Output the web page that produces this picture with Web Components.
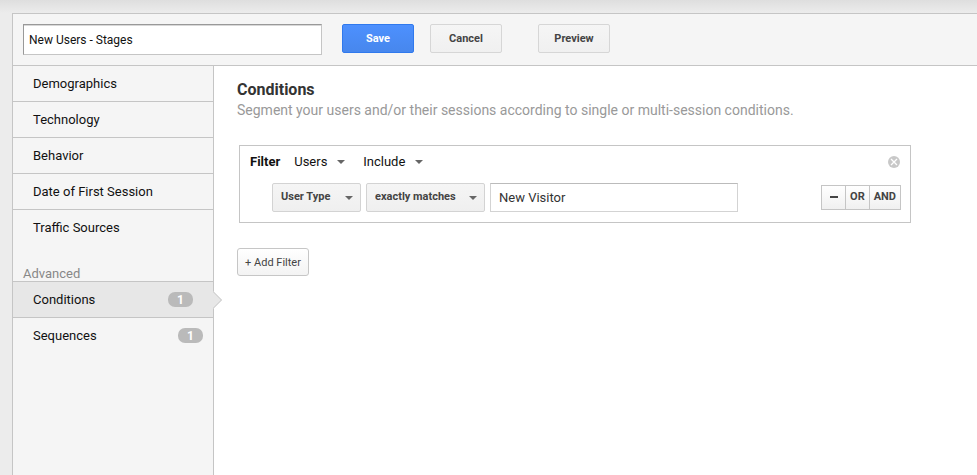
<!DOCTYPE html>
<html lang="en">
<head>
<meta charset="utf-8">
<title>Segment builder</title>
<style>
  html, body { margin: 0; height: 100%; }
  body { font: 13px/18px Roboto, "Liberation Sans", sans-serif; color: #111; background: #ececec; }
</style>
</head>
<body>
<segment-editor>
  <editor-toolbar slot="toolbar">
    <segment-name value="New Users - Stages"></segment-name>
    <push-button kind="primary">Save</push-button>
    <push-button>Cancel</push-button>
    <push-button spaced>Preview</push-button>
  </editor-toolbar>
  <side-nav slot="nav">
    <nav-item>Demographics</nav-item>
    <nav-item>Technology</nav-item>
    <nav-item>Behavior</nav-item>
    <nav-item>Date of First Session</nav-item>
    <nav-item last>Traffic Sources</nav-item>
    <nav-heading>Advanced</nav-heading>
    <nav-item count="1" selected>Conditions</nav-item>
    <nav-item count="1" last>Sequences</nav-item>
  </side-nav>
  <section-intro>
    <span slot="title">Conditions</span>
    Segment your users and/or their sessions according to single or multi-session conditions.
  </section-intro>
  <filter-card>
    <drop-down slot="scope" plain label="Filter scope" value="Users" style="--width:51px"></drop-down>
    <drop-down slot="scope" plain label="Filter mode" value="Include" style="--width:60px"></drop-down>
    <drop-down label="Dimension" value="User Type" style="--width:89px"></drop-down>
    <drop-down label="Match type" value="exactly matches" style="--width:119px"></drop-down>
    <value-field value="New Visitor"></value-field>
    <logic-buttons slot="logic"></logic-buttons>
  </filter-card>
  <push-button kind="add">+ Add Filter</push-button>
</segment-editor>

<script>
  const define = (name, html, setup) => {
    const template = document.createElement('template');
    template.innerHTML = '<style>*{box-sizing:border-box}:host{box-sizing:border-box}</style>' + html;
    customElements.define(name, class extends HTMLElement {
      constructor() {
        super();
        this.attachShadow({ mode: 'open' }).append(template.content.cloneNode(true));
      }
      connectedCallback() { if (setup) setup(this, this.shadowRoot); }
    });
  };

  define('segment-editor', `
    <style>
      :host { display: block; min-height: 100%; padding: 13px 0 0 12px;
        background: linear-gradient(#dedede, #ececec 13px); }
      .panel { display: grid; grid-template: auto 1fr / 201px 1fr; min-height: calc(100vh - 13px);
        border: solid #c5c5c5; border-width: 1px 0 0 1px; background: #f5f5f5; }
      header { grid-column: 1 / -1; border-bottom: 1px solid #c5c5c5; }
      aside { border-right: 1px solid #c5c5c5; }
      main { padding: 14px 66px 20px 23px; background: #fff; }
    </style>
    <div class="panel">
      <header><slot name="toolbar"></slot></header>
      <aside><slot name="nav"></slot></aside>
      <main><slot></slot></main>
    </div>`);

  define('editor-toolbar', `
    <style>:host { display: flex; gap: 16px; padding: 10px; }</style><slot></slot>`);

  define('segment-name', `
    <style>
      :host { display: block; margin-right: 4px; }
      input { display: block; width: 299px; height: 31px; padding: 0 5px; border: 1px solid #c5c5c5;
        border-top-color: #999; border-left-color: #999; box-shadow: inset 0 1px #d8d8d8;
        font: 12px/16px Roboto, sans-serif; color: #111; background: #fff; }
    </style><input type="text" aria-label="Segment name">`,
    (host, root) => { root.querySelector('input').value = host.getAttribute('value'); });

  define('push-button', `
    <style>
      :host { display: block; }
      :host([spaced]) { margin-left: 20px; }
      button { display: block; min-width: 72px; height: 29px; padding: 0 7px; border: 1px solid #d6d6d6;
        border-radius: 2px; background: linear-gradient(#f5f5f5, #f0f0f0); color: #444;
        font: bold 11px/16px Roboto, sans-serif; }
      :host([kind=primary]) button { border-color: #3079ed; color: #fff;
        background: linear-gradient(#4d90fe, #4787ed); }
      :host([kind=add]) { margin-top: 25px; }
      :host([kind=add]) button { height: 28px; padding-top: 2px; border-color: #c6c6c6; border-radius: 3px;
        background: linear-gradient(#fff, #f3f3f3); font-weight: 400; }
    </style><button type="button"><slot></slot></button>`);

  define('side-nav', `<style>:host { display: block; } nav { display: block; }</style>
    <nav aria-label="Segment sections"><slot></slot></nav>`);

  define('nav-item', `
    <style>
      :host { display: block; position: relative; }
      a { display: flex; justify-content: space-between; align-items: center; height: 36px;
        padding: 0 10px 0 20px; border-bottom: 1px solid #c5c5c5; color: #111; text-decoration: none; }
      :host([last]) a { border-bottom-color: transparent; }
      :host([selected]) a { padding-right: 20px; background: #e7e7e7; }
      .count { width: 25px; height: 15px; border-radius: 7px; background: #bababa; color: #fff;
        font: bold 12px/17px Roboto, sans-serif; text-align: center; }
      svg { position: absolute; left: 100%; top: 9px; }
      [hidden] { display: none; }
    </style>
    <a href="#"><slot></slot><span class="count"></span></a>
    <svg width="10" height="18" viewBox="0 0 10 18" aria-hidden="true">
      <path d="M0 0 L9 9 L0 18Z" fill="#e7e7e7"/><path d="M0 .5 L8.5 9 L0 17.5" fill="none" stroke="#c5c5c5"/>
    </svg>`,
    (host, root) => {
      const count = root.querySelector('.count');
      count.textContent = host.getAttribute('count') || '';
      count.hidden = !host.hasAttribute('count');
      root.querySelector('svg').toggleAttribute('hidden', !host.hasAttribute('selected'));
    });

  define('nav-heading', `
    <style>:host { display: block; padding: 21px 10px 0; border-bottom: 1px solid #c5c5c5; line-height: 14px; color: #888; }</style>
    <slot></slot>`);

  define('section-intro', `
    <style>
      :host { display: block; }
      h1 { margin: 0; font: bold 16px/20px Roboto, sans-serif; color: #333; }
      p { margin: 0; padding-bottom: 2px; font-size: 14px; line-height: 20px; color: #999; }
    </style><h1><slot name="title"></slot></h1><p><slot></slot></p>`);

  define('filter-card', `
    <style>
      :host { display: block; margin: 23px 0 0 2px; padding: 6px 9px 10px 10px; border: 1px solid #c5c5c5; }
      .row { display: flex; align-items: center; }
      .head { gap: 18px; height: 20px; }
      strong { margin-right: -4px; }
      .close { margin-left: auto; width: 14px; height: 14px; padding: 0; border: 0; background: none; }
      .close svg { display: block; }
      .body { gap: 5px; margin: 11px 0 0 22px; }
      .logic { margin-left: auto; }
    </style>
    <div class="row head">
      <strong>Filter</strong><slot name="scope"></slot>
      <button class="close" type="button" aria-label="Remove filter">
        <svg width="14" height="14" viewBox="0 0 14 14"><circle cx="7" cy="7" r="6" fill="#c8c8c8"/>
        <path d="M4 4 L10 10 M10 4 L4 10" stroke="#fff" stroke-width="1.3"/></svg>
      </button>
    </div>
    <div class="row body"><slot></slot><div class="logic"><slot name="logic"></slot></div></div>`);

  define('drop-down', `
    <style>
      :host { display: grid; align-items: center; width: var(--width); }
      select, svg { grid-area: 1 / 1; }
      select { appearance: none; width: 100%; height: 29px; margin: 0; padding: 0 8px 2px;
        border: 1px solid #d3d3d3; border-radius: 2px; background: linear-gradient(#f5f5f5, #efefef);
        color: #444; font: bold 11px/16px Roboto, sans-serif; }
      svg { justify-self: end; margin-right: 8px; pointer-events: none; z-index: 1; }
      :host([plain]) select { height: 20px; padding: 0; border: 0; background: none;
        font: 13px/18px Roboto, sans-serif; color: #111; }
      :host([plain]) svg { margin: 0; }
    </style>
    <select></select>
    <svg width="8" height="4" viewBox="0 0 8 4" aria-hidden="true"><path d="M0 0H8L4 4Z" fill="#666"/></svg>`,
    (host, root) => {
      const select = root.querySelector('select');
      select.setAttribute('aria-label', host.getAttribute('label'));
      select.replaceChildren(new Option(host.getAttribute('value')));
    });

  define('value-field', `
    <style>
      :host { display: block; flex: 0 1 248px; min-width: 0; }
      input { display: block; width: 100%; height: 29px; padding: 0 8px; border: 1px solid #d3d3d3;
        border-top-color: #bbb; background: #fff; color: #333; font: 13px/18px Roboto, sans-serif; }
    </style><input type="text" aria-label="Match value">`,
    (host, root) => { root.querySelector('input').value = host.getAttribute('value'); });

  define('logic-buttons', `
    <style>
      :host { display: flex; border: 1px solid #c5c5c5; }
      button { height: 23px; min-width: 23px; padding: 0 4px 2px; border: 0; color: #444;
        background: linear-gradient(#fff, #f0f0f0); font: bold 11px/16px Roboto, sans-serif; }
      button + button { border-left: 1px solid #c5c5c5; }
      .minus { display: grid; place-items: center; padding: 0 0 2px; }
    </style>
    <button class="minus" type="button" aria-label="Remove condition">
      <svg width="8" height="2" viewBox="0 0 8 2"><path d="M0 0H8V2H0Z" fill="#444"/></svg>
    </button><button type="button">OR</button><button type="button">AND</button>`);
</script>
</body>
</html>
